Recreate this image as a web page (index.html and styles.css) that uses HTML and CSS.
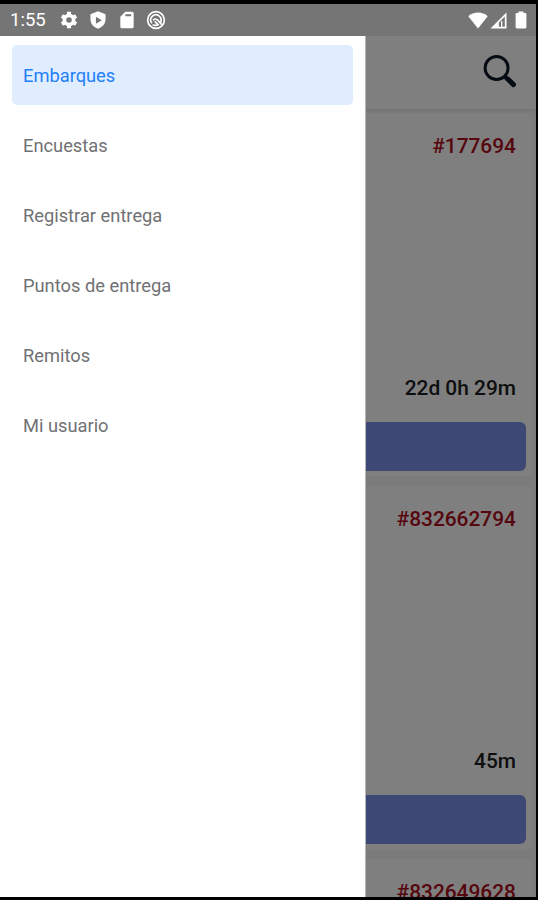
FILE: index.html
```html
<!DOCTYPE html>
<html lang="es">
<head>
    <meta charset="UTF-8">
    <meta name="viewport" content="width=device-width, initial-scale=1.0">
    <title>Embarques</title>
    <link rel="stylesheet" href="styles.css">
</head>
<body>
    <div class="screen">
        <div class="status-bar">
            <span class="time">1:55</span>
            <div class="status-icons">
                <svg width="20" height="20" viewBox="0 0 20 20" fill="none" stroke="#fff"><circle cx="10" cy="10" r="4.600" stroke-width="3.600"/><path d="M10 1.800v16.400M2.900 5.900l14.200 8.200M2.900 14.100l14.200-8.200" stroke-width="4" stroke-dasharray="3 10.400 3"/></svg>
                <svg width="20" height="20" viewBox="0 0 24 24" fill="#fff"><path fill-rule="evenodd" d="M12 1.500 3 5v6.500c0 5 3.800 9.500 9 11 5.200-1.500 9-6 9-11V5zM9.500 8l7 4.200-7 4.200z"/></svg>
                <svg width="20" height="20" viewBox="0 0 24 24" fill="#fff"><path fill-rule="evenodd" d="M18 2h-8L4 8v12c0 1.100.9 2 2 2h12c1.100 0 2-.9 2-2V4c0-1.100-.9-2-2-2zM10 5h7v2.500h-7z"/></svg>
                <svg width="20" height="20" viewBox="0 0 24 24" fill="none" stroke="#fff" stroke-width="2"><circle cx="12" cy="12" r="10"/><path d="M17.300 15A6.200 6.200 0 1 0 7 15.800M8.500 12.500c1.500-2.500 4-2 5.500-.3l5 5.300M8 17.500c2 1.300 4.500 1.200 6.500.3l-4-4.300"/></svg>
            </div>
            <div class="signal-icons">
                <svg width="20" height="17" viewBox="0 0 20 17" fill="#fff"><path d="M10 16.500 0.300 4.200C3 1.800 6.300.6 10 .6s7 1.200 9.700 3.600z"/></svg>
                <svg width="17" height="17" viewBox="0 0 17 17"><path fill="#fff" fill-rule="evenodd" d="M16.500.5v16H.5zM14.800 4.600 8.800 10.600v4.100h6z"/><path fill="#fff" d="M11 9h1.300v6H11z"/></svg>
                <svg width="12" height="18" viewBox="0 0 12 18" fill="#fff"><path d="M3.500 2V.5h5V2h1.700c.7 0 1.200.5 1.200 1.200v13c0 .7-.5 1.200-1.200 1.200H1.800c-.7 0-1.200-.5-1.200-1.200v-13C.6 2.500 1.100 2 1.800 2z"/></svg>
            </div>
        </div>

        <div class="app">
            <header class="header">
                <svg width="36" height="36" viewBox="0 0 36 36" fill="none" stroke="#0c1628"><circle cx="14.600" cy="14" r="11.500" stroke-width="3"/><path d="m22.800 22.500 2.500 2.500" stroke-width="4"/><path d="m25.500 24.800 6 5.800" stroke-width="5" stroke-linecap="round"/></svg>
            </header>
            <main class="list">
                <div class="card">
                    <span class="card-id">#177694</span>
                    <span class="card-time">22d 0h 29m</span>
                    <button class="card-button"></button>
                </div>
                <div class="card">
                    <span class="card-id">#832662794</span>
                    <span class="card-time">45m</span>
                    <button class="card-button"></button>
                </div>
                <div class="card">
                    <span class="card-id">#832649628</span>
                </div>
            </main>

            <div class="backdrop"></div>
            <nav class="drawer">
                <a class="drawer-item active">Embarques</a>
                <a class="drawer-item">Encuestas</a>
                <a class="drawer-item">Registrar entrega</a>
                <a class="drawer-item">Puntos de entrega</a>
                <a class="drawer-item">Remitos</a>
                <a class="drawer-item">Mi usuario</a>
            </nav>
        </div>
    </div>
</body>
</html>
```
FILE: styles.css
```css
* {
    box-sizing: border-box;
}

body {
    margin: 0;
    background-color: #000;
    font-family: Roboto, sans-serif;
}

.screen {
    display: flex;
    flex-direction: column;
    height: 900px;
    padding: 4px 2px 3px 0;
    overflow: hidden;
}

.status-bar {
    display: flex;
    flex: none;
    align-items: center;
    height: 32px;
    padding: 0 9px 0 10px;
    background-color: #757575;
    color: #fff;
}

.time {
    width: 49px;
    font-size: 18.5px;
}

.status-icons {
    display: flex;
    gap: 9px;
}

.signal-icons {
    display: flex;
    align-items: center;
    gap: 2px;
    margin-left: auto;
}

.signal-icons svg:last-child {
    margin-left: 6px;
}

.app {
    position: relative;
    display: flex;
    flex: 1;
    flex-direction: column;
    min-height: 0;
    overflow: hidden;
    background-color: #f6f6f6;
}

.header {
    display: flex;
    flex: none;
    align-items: center;
    justify-content: flex-end;
    height: 73px;
    padding: 0 18px 2px 0;
    background-color: #fff;
    box-shadow: 0 1px 3px rgba(0, 0, 0, 0.1);
}

.list {
    display: flex;
    flex-direction: column;
    gap: 10px;
    padding: 4px 4px 0 0;
}

.card {
    display: flex;
    flex: none;
    flex-direction: column;
    height: 363px;
    padding: 21px 6px 5px 10px;
    border-radius: 4px;
    background-color: #fff;
}

.card-id,
.card-time {
    padding-right: 10px;
    font-size: 20.9px;
    font-weight: 500;
    line-height: 24px;
    text-align: right;
}

.card-id {
    color: #ac0c1a;
}

.card-time {
    margin-top: auto;
    margin-bottom: 22px;
    color: #1c1c1e;
}

.card-button {
    height: 49px;
    border: none;
    border-radius: 6px;
    background-color: #7c90ea;
}

/* Drawer menu over the list */
.backdrop {
    position: absolute;
    inset: 0;
    background-color: rgba(0, 0, 0, 0.5);
}

.drawer {
    position: absolute;
    top: 0;
    bottom: 0;
    left: 0;
    display: flex;
    flex-direction: column;
    gap: 10px;
    width: 366px;
    padding: 9px 12px;
    border-right: 1px solid #b5b5b5;
    background-color: #fff;
}

.drawer-item {
    display: flex;
    align-items: center;
    height: 60px;
    padding: 0 11px;
    border-radius: 5px;
    color: #707173;
    font-size: 18.3px;
}

.drawer-item.active {
    background-color: #e0edff;
    color: #1f80f8;
}
```
